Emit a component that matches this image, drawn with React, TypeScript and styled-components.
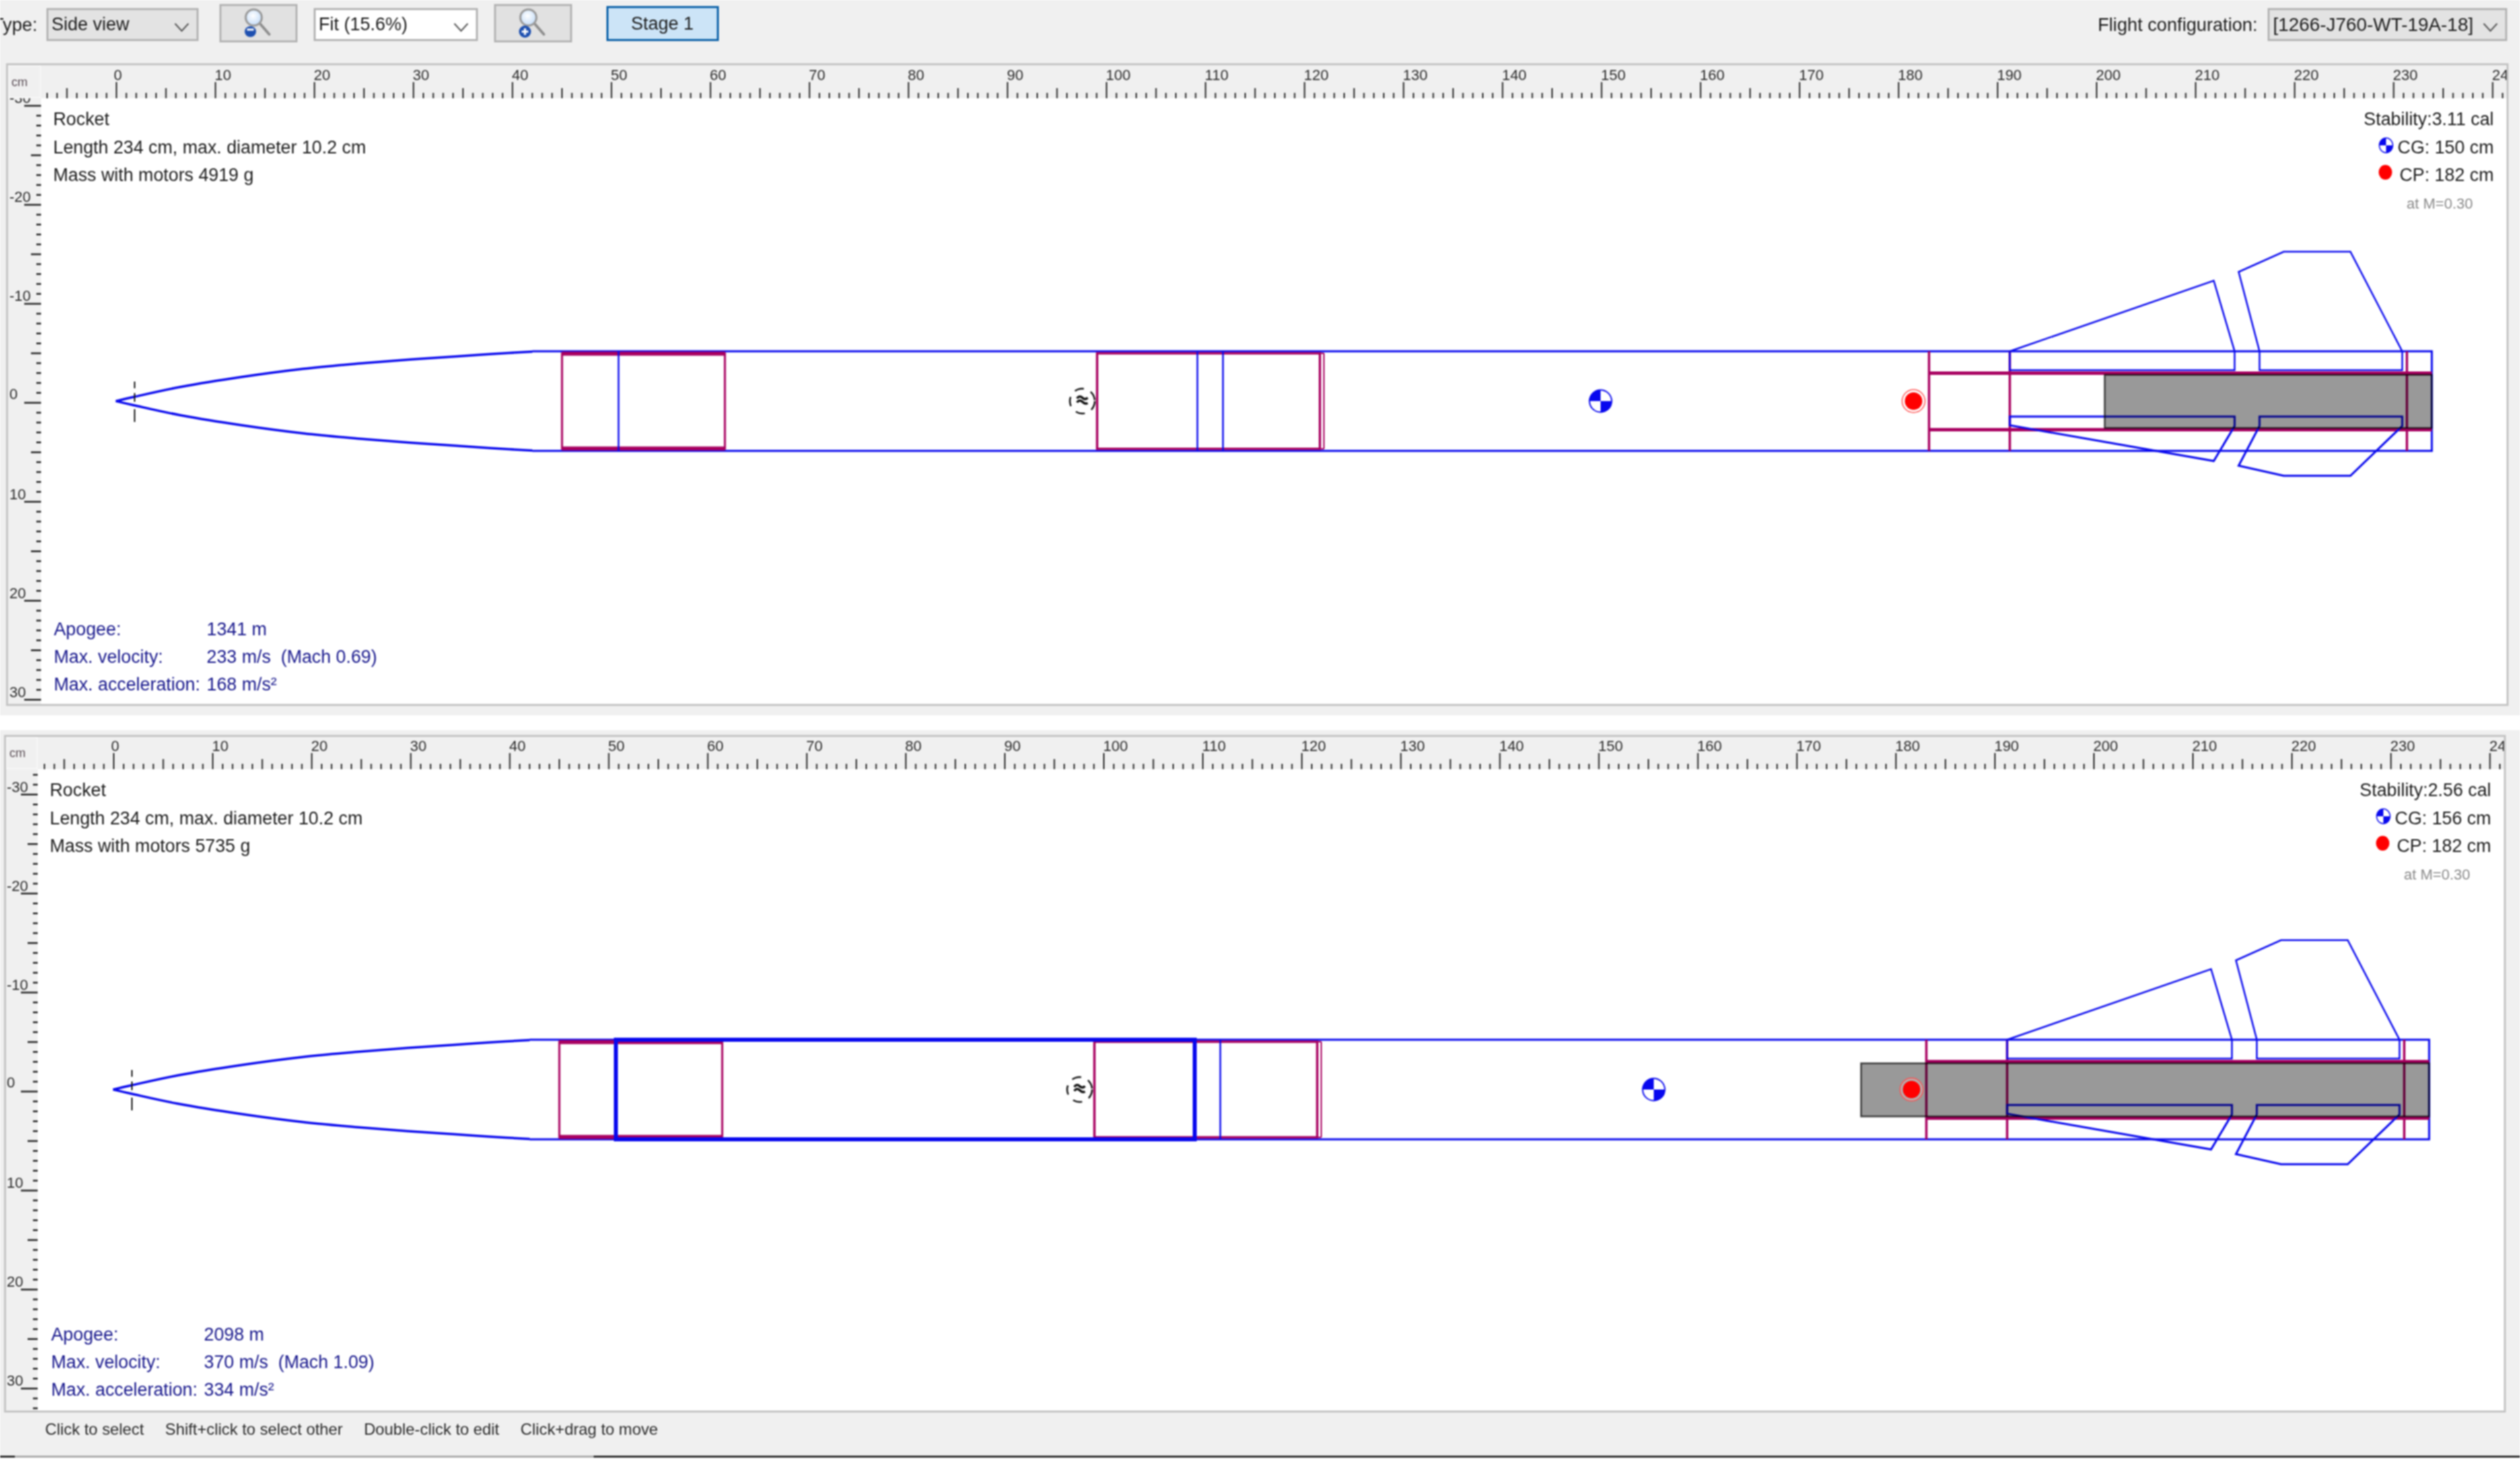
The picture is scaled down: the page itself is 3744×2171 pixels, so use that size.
import React from "react";
import styled, { createGlobalStyle } from "styled-components";

const Global = createGlobalStyle`
  html, body { margin: 0; padding: 0; background: #fff; }
  body { font-family: "Liberation Sans", Arial, sans-serif; color: #1c1c1c; }
`;

const Page = styled.div`
  width: 3744px; height: 2171px; overflow: hidden; background: #fff;
  display: flex; flex-direction: column;
  filter: blur(0.8px);
`;
const GraySection = styled.section<{ $pad: string; $h: number }>`
  background: #f0f0f0; padding: ${p => p.$pad}; height: ${p => p.$h}px;
  box-sizing: border-box; display: flex; flex-direction: column; flex: none;
`;
const WhiteGap = styled.div`height: 22px; background: #fff; flex: none;`;
const Toolbar = styled.div`
  height: 94px; margin-left: -9px; margin-right: -17px; padding: 6px 19px 0 0;
  box-sizing: border-box; display: flex; align-items: flex-start; flex: none;
  font-size: 27px; overflow: hidden;
`;
const ToolLabel = styled.span`
  line-height: 61px; white-space: nowrap; font-size: 27.2px;
`;
const TypeLabel = styled(ToolLabel)`margin-left: -11px; margin-right: 13px;`;
const Combo = styled.div<{ $w: number; $white?: boolean; $ml?: number; $fs?: number }>`
  width: ${p => p.$w}px; height: 49px; margin-top: 6px; margin-left: ${p => p.$ml ?? 0}px;
  box-sizing: border-box; border: 3px solid #b4b4b4;
  background: ${p => (p.$white ? "#fff" : "#e3e3e3")};
  display: flex; align-items: center; justify-content: space-between;
  padding: 0 10px 0 5px; white-space: nowrap; flex: none; font-size: ${p => p.$fs ?? 27}px;
`;
const IconButton = styled.div<{ $ml: number }>`
  width: 116px; height: 57px; margin-left: ${p => p.$ml}px; box-sizing: border-box;
  border: 3px solid #b4b4b4; background: #e1e1e1; flex: none; position: relative;
`;
const IconSvg = styled.svg`position: absolute; left: -3px; top: -3px;`;
const StageButton = styled.div`
  width: 167px; height: 52px; margin: 3px 0 0 51px; box-sizing: border-box;
  border: 3px solid #0a60a8; background: #cce4f7; flex: none;
  display: flex; align-items: center; justify-content: center;
`;
const RightTools = styled.div`
  margin-left: auto; display: flex; align-items: flex-start; gap: 15px;
`;
const Panel = styled.div<{ $rw: number; $rh: number; $h: number }>`
  height: ${p => p.$h}px; box-sizing: border-box; flex: none;
  border: 3px solid #c4c4c4; background: #fff;
  display: grid; grid-template-columns: ${p => p.$rw}px 1fr; grid-template-rows: ${p => p.$rh}px 1fr;
`;
const Corner = styled.div`
  background: #f0f0f0; border: 2px solid #f7f7f7; box-sizing: border-box;
  display: flex; align-items: flex-end; justify-content: flex-start; padding: 0 0 11px 3px;
  font-size: 18px; color: #5a4d55;
`;
const RulerSvg = styled.svg`
  display: block; width: 100%; height: 100%; background: #f0f0f0;
`;
const RulerText = styled.text`
  font-family: "Liberation Sans", Arial, sans-serif; font-size: 22px; fill: #2a2a2a;
`;
const Canvas = styled.div`
  position: relative; background: #fff; overflow: hidden; min-width: 0; min-height: 0;
`;
const DrawingSvg = styled.svg`
  position: absolute; left: 0; top: 0; width: 100%; height: 100%;
`;
const InfoBlock = styled.div`
  position: absolute; left: 18px; top: 11px; font-size: 26.8px; line-height: 41.5px; white-space: nowrap;
`;
const StabilityBlock = styled.div`
  position: absolute; right: 19px; top: 11px; font-size: 26.8px; line-height: 41.5px;
  display: flex; flex-direction: column; align-items: flex-end; white-space: nowrap;
`;
const LegendRow = styled.div`position: relative;`;
const LegendIcon = styled.svg<{ $left: number }>`
  position: absolute; top: 4px; left: ${p => p.$left}px; display: block;
`;
const MachNote = styled.div`
  font-size: 22px; color: #8a8a8a; margin-right: 31px;
`;
const FlightBlock = styled.div<{ $left: number; $bottom: number }>`
  position: absolute; left: ${p => p.$left}px; bottom: ${p => p.$bottom}px;
  display: grid; grid-template-columns: 227px auto; font-size: 26.8px; line-height: 41px;
  color: #17178c; white-space: pre;
`;
const Footer = styled.div`
  height: 64px; flex: none; display: flex; align-items: center; gap: 31.5px;
  margin-left: 61px; padding-bottom: 14px; box-sizing: border-box; font-size: 23.8px;
  color: #2a2a2a; white-space: nowrap;
`;
const BottomBar = styled.div`height: 3px; display: flex; flex: none;`;
const BarPart = styled.div<{ $w?: number; $c: string }>`
  background: ${p => p.$c};
  ${p => (p.$w ? `width: ${p.$w}px;` : "flex: 1;")}
`;

const Chevron = () => (
  <svg width="24" height="14" viewBox="0 0 24 14" style={{ marginTop: 8 }}>
    <polyline points="2,1 12,12 22,1" fill="none" stroke="#555" strokeWidth="2" />
  </svg>
);

const Magnifier = ({ id, plus }: { id: string; plus?: boolean }) => (
  <IconSvg width="116" height="57" viewBox="0 0 116 57">
    <defs>
      <radialGradient id={id} cx="45%" cy="40%" r="60%">
        <stop offset="0%" stopColor="#ffffff" />
        <stop offset="100%" stopColor="#c4dcf8" />
      </radialGradient>
    </defs>
    <line x1="61" y1="30" x2="74" y2="45" stroke="#8e8e8e" strokeWidth="4" strokeLinecap="round" />
    <circle cx="51" cy="20" r="12" fill={`url(#${id})`} stroke="#9a9a9a" strokeWidth="3" />
    <ellipse cx="46" cy="41" rx={plus ? 9 : 8.5} ry={plus ? 9 : 8} fill="#1d4fb0" />
    {plus ? (
      <path d="M41 41h10M46 36v10" stroke="#fff" strokeWidth="3" />
    ) : (
      <path d="M41 38h10" stroke="#fff" strokeWidth="3" />
    )}
  </IconSvg>
);

const TopRuler = ({ x0, x1, y0, y1, zero }: { x0: number; x1: number; y0: number; y1: number; zero: number }) => {
  const k = 14.71;
  const ticks: React.ReactElement[] = [];
  for (let cm = -8; cm <= 242; cm++) {
    const x = zero + cm * k;
    if (x < x0) continue;
    const len = cm % 10 === 0 ? 24 : cm % 5 === 0 ? 15 : 8;
    ticks.push(<line key={cm} x1={x} x2={x} y1={y1 - len} y2={y1} stroke="#222" strokeWidth="2" />);
    if (cm % 10 === 0 && cm >= 0) {
      ticks.push(
        <RulerText key={`t${cm}`} x={cm === 0 ? x - 4 : x - 1} y={y1 - 27}>
          {cm}
        </RulerText>
      );
    }
  }
  return <RulerSvg viewBox={`${x0} ${y0} ${x1 - x0} ${y1 - y0}`}>{ticks}</RulerSvg>;
};

const LeftRuler = ({ x0, x1, y0, y1, zero, lx }: { x0: number; x1: number; y0: number; y1: number; zero: number; lx: number }) => {
  const k = 14.71;
  const ticks: React.ReactElement[] = [];
  for (let v = -35; v <= 37; v++) {
    const y = zero + v * k;
    const len = v % 10 === 0 ? 25 : v % 5 === 0 ? 15 : 7;
    ticks.push(<line key={v} x1={x1 - len} x2={x1} y1={y} y2={y} stroke="#222" strokeWidth="2.5" />);
    if (v % 10 === 0) {
      ticks.push(
        <RulerText key={`t${v}`} x={lx} y={v === 0 ? y - 6 : y - 4}>
          {v}
        </RulerText>
      );
    }
  }
  return <RulerSvg viewBox={`${x0} ${y0} ${x1 - x0} ${y1 - y0}`}>{ticks}</RulerSvg>;
};

const BLUE = "#0808ee";
const MAG = "#a80060";
const TOP = 522, BOT = 670, MID = 596;
const NOSE: [number, number][] = [
  [172, 0], [198, 6], [268, 21], [360, 36], [451, 48], [535, 56], [612, 62], [680, 66.5], [731, 70], [791, 73.5],
];

// Catmull-Rom through the measured ogive profile; sign picks the upper or lower half.
const nosePath = (sign: number) => {
  const pts = NOSE.map(([x, o]) => [x, MID + sign * o] as [number, number]);
  let d = `M${pts[0][0]} ${pts[0][1]}`;
  for (let i = 0; i < pts.length - 1; i++) {
    const p0 = pts[Math.max(0, i - 1)];
    const p1 = pts[i];
    const p2 = pts[i + 1];
    const p3 = pts[Math.min(pts.length - 1, i + 2)];
    const c1x = p1[0] + (p2[0] - p0[0]) / 6;
    const c1y = p1[1] + (p2[1] - p0[1]) / 6;
    const c2x = p2[0] - (p3[0] - p1[0]) / 6;
    const c2y = p2[1] - (p3[1] - p1[1]) / 6;
    d += `C${c1x} ${c1y} ${c2x} ${c2y} ${p2[0]} ${p2[1]}`;
  }
  return d;
};

const CgMark = ({ cx, cy }: { cx: number; cy: number }) => (
  <g>
    <circle cx={cx} cy={cy} r="16.5" fill="#fff" stroke={BLUE} strokeWidth="2" />
    <path d={`M${cx} ${cy}V${cy - 16.5}A16.5 16.5 0 0 0 ${cx - 16.5} ${cy}Z`} fill={BLUE} />
    <path d={`M${cx} ${cy}V${cy + 16.5}A16.5 16.5 0 0 0 ${cx + 16.5} ${cy}Z`} fill={BLUE} />
  </g>
);

const Rocket = ({ second }: { second?: boolean }) => (
  <g transform={second ? "translate(-4 1023)" : undefined} fill="none">
    <path d={nosePath(-1)} stroke={BLUE} strokeWidth="3.5" />
    <path d={nosePath(1)} stroke={BLUE} strokeWidth="3.5" />
    <path d={`M791 ${TOP}H3613V${BOT}H791`} stroke={BLUE} strokeWidth="3" />
    <path d="M200 567v10M200 584v13M200 608v19" stroke="#111" strokeWidth="2" />

    {/* forward tube */}
    <rect x="835" y="525" width="242" height="142" stroke={MAG} strokeWidth="3" />
    <path d="M835 525.5H1077M835 666.5H1077" stroke={MAG} strokeWidth="6" />
    {!second && <line x1="919" x2="919" y1={TOP} y2={BOT} stroke={BLUE} strokeWidth="2.5" />}

    {/* centre tube */}
    <rect x="1630" y="525" width="331" height="142" stroke={MAG} strokeWidth="3.5" />
    <path d="M1967 525V667M1961 525H1967M1961 667H1967" stroke={MAG} strokeWidth="2" />
    <line x1="1817" x2="1817" y1={TOP} y2={BOT} stroke={BLUE} strokeWidth="2.5" />
    {!second && <line x1="1779" x2="1779" y1={TOP} y2={BOT} stroke={BLUE} strokeWidth="2.5" />}

    {second && <rect x="919" y={TOP} width="860" height={BOT - TOP} stroke={BLUE} strokeWidth="6" />}

    {/* rail button */}
    <circle cx="1608" cy="596" r="18.5" stroke="#111" strokeWidth="2.5" strokeDasharray="14 11" />
    <path d="M1600 592q4-5 8-1t8 0M1600 598q4-5 8-1t8 2" stroke="#111" strokeWidth="3.5" />

    {/* aft section */}
    <path d="M2866 522V670M2986 522V670M3576 522V670" stroke={MAG} strokeWidth="3.5" />
    <rect x="2866" y="552" width="747" height="5" fill={MAG} />
    <rect x="2866" y="636" width="747" height="5" fill={MAG} />

    {/* fins */}
    <path d="M2986 522L3289 417L3320 522V550H2986Z" stroke={BLUE} strokeWidth="2.5" />
    <path d="M3357 522L3326 404L3393 374H3492L3569 522V550H3357Z" stroke={BLUE} strokeWidth="2.5" />
    <path d="M2986 619H3320V633L3289 685L2986 632Z" stroke={BLUE} strokeWidth="3" />
    <path d="M3357 619H3569V633L3492 707H3393L3326 692L3357 633Z" stroke={BLUE} strokeWidth="3" />

    {/* motor */}
    <rect
      x={second ? 2769 : 3127}
      y="557"
      width={second ? 844 : 486}
      height="79"
      fill="rgba(0,0,0,0.4)"
      stroke="rgba(0,0,0,0.7)"
      strokeWidth="2.5"
    />

    {/* CP */}
    <circle cx={second ? 2844 : 2843} cy="596" r="17" fill="#fff" fillOpacity={second ? 0.25 : 1} stroke="#ff5050" strokeWidth="1.5" />
    <circle cx={second ? 2844 : 2843} cy="596" r="13" fill="#ff0000" />
  </g>
);

type PanelCfg = {
  rw: number; rh: number; h: number;
  x0: number; x1: number; yTop: number; yCanvas: number; yBot: number;
  zeroX: number; zeroY: number; lx: number;
};

const RocketPanel = ({ cfg, second, mass, stability, cg, apogee, velocity, accel, flightBottom, flightLeft }: {
  cfg: PanelCfg; second?: boolean; mass: string; stability: string; cg: string;
  apogee: string; velocity: string; accel: string; flightBottom: number; flightLeft: number;
}) => (
  <Panel $rw={cfg.rw} $rh={cfg.rh} $h={cfg.h}>
    <Corner>cm</Corner>
    <TopRuler x0={cfg.x0} x1={cfg.x1} y0={cfg.yTop} y1={cfg.yCanvas} zero={cfg.zeroX} />
    <LeftRuler x0={cfg.x0 - cfg.rw} x1={cfg.x0} y0={cfg.yCanvas} y1={cfg.yBot} zero={cfg.zeroY} lx={cfg.lx} />
    <Canvas>
      <DrawingSvg viewBox={`${cfg.x0} ${cfg.yCanvas} ${cfg.x1 - cfg.x0} ${cfg.yBot - cfg.yCanvas}`}>
        <Rocket second={second} />
        <CgMark cx={second ? 2457 : 2378} cy={second ? 1619 : 596} />
      </DrawingSvg>
      <InfoBlock>
        <div>Rocket</div>
        <div>Length 234 cm, max. diameter 10.2 cm</div>
        <div>Mass with motors {mass}</div>
      </InfoBlock>
      <StabilityBlock>
        <div>Stability:{stability}</div>
        <LegendRow>
          <LegendIcon $left={-29} width="24" height="26" viewBox="0 0 24 26">
            <ellipse cx="12" cy="13" rx="10" ry="11" fill="#fff" stroke={BLUE} strokeWidth="1.5" />
            <path d="M12 13V2A10 11 0 0 0 2 13ZM12 13V24A10 11 0 0 0 22 13Z" fill={BLUE} />
          </LegendIcon>
          CG: {cg}
        </LegendRow>
        <LegendRow>
          <LegendIcon $left={-33} width="24" height="26" viewBox="0 0 24 26">
            <ellipse cx="12" cy="12" rx="10" ry="11" fill="#f00" />
          </LegendIcon>
          CP: 182 cm
        </LegendRow>
        <MachNote>at M=0.30</MachNote>
      </StabilityBlock>
      <FlightBlock $left={flightLeft} $bottom={flightBottom}>
        <div>Apogee:</div><div>{apogee}</div>
        <div>Max. velocity:</div><div>{velocity}</div>
        <div>Max. acceleration:</div><div>{accel}</div>
      </FlightBlock>
    </Canvas>
  </Panel>
);

const P1: PanelCfg = { rw: 49, rh: 49, h: 955, x0: 61, x1: 3724, yTop: 97, yCanvas: 146, yBot: 1046, zeroX: 173, zeroY: 598.5, lx: 14 };
const P2: PanelCfg = { rw: 47, rh: 48, h: 1007, x0: 56, x1: 3720, yTop: 1095, yCanvas: 1143, yBot: 2096, zeroX: 169, zeroY: 1622, lx: 10 };

export default function App() {
  return (
    <Page>
      <Global />
      <GraySection $pad="0 17px 14px 9px" $h={1063}>
        <Toolbar>
          <TypeLabel>Type:</TypeLabel>
          <Combo $w={226}>Side view<Chevron /></Combo>
          <IconButton $ml={31}><Magnifier id="lensOut" /></IconButton>
          <Combo $w={244} $white $ml={24}>Fit (15.6%)<Chevron /></Combo>
          <IconButton $ml={24}><Magnifier id="lensIn" plus /></IconButton>
          <StageButton>Stage 1</StageButton>
          <RightTools>
            <ToolLabel>Flight configuration:</ToolLabel>
            <Combo $w={356} $fs={27.9}>[1266-J760-WT-19A-18]<Chevron /></Combo>
          </RightTools>
        </Toolbar>
        <RocketPanel
          cfg={P1}
          mass="4919 g"
          stability="3.11 cal"
          cg="150 cm"
          apogee="1341 m"
          velocity="233 m/s  (Mach 0.69)"
          accel="168 m/s²"
          flightLeft={19}
          flightBottom={8}
        />
      </GraySection>
      <WhiteGap />
      <GraySection $pad="7px 21px 0 6px" $h={1078}>
        <RocketPanel
          cfg={P2}
          second
          mass="5735 g"
          stability="2.56 cal"
          cg="156 cm"
          apogee="2098 m"
          velocity="370 m/s  (Mach 1.09)"
          accel="334 m/s²"
          flightLeft={20}
          flightBottom={10}
        />
        <Footer>
          <span>Click to select</span>
          <span>Shift+click to select other</span>
          <span>Double-click to edit</span>
          <span>Click+drag to move</span>
        </Footer>
      </GraySection>
      <BottomBar>
        <BarPart $w={22} $c="#2d2d2d" />
        <BarPart $w={860} $c="#ababab" />
        <BarPart $c="#2d2d2d" />
      </BottomBar>
    </Page>
  );
}
